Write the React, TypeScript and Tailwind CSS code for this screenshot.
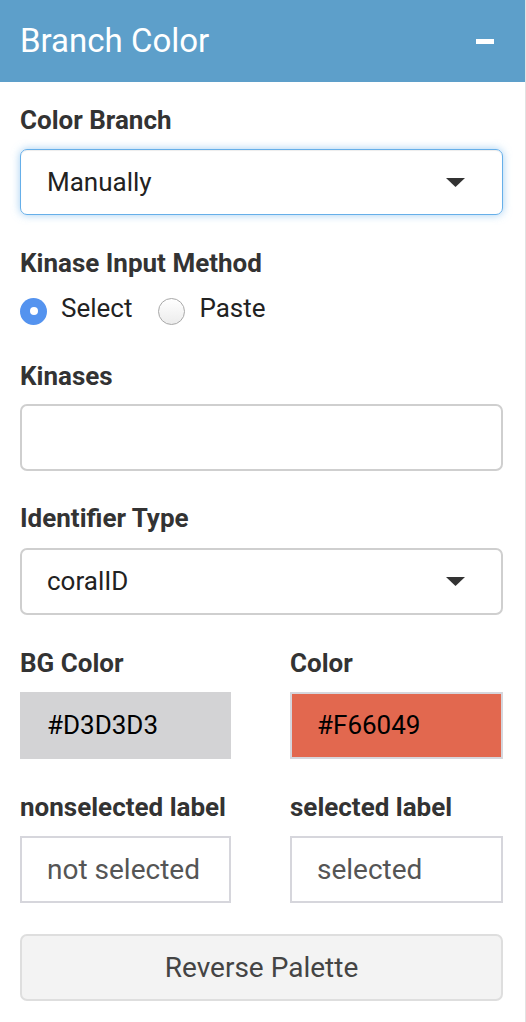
import { useState } from "react";

function Caret() {
  return (
    <svg width="19" height="9" viewBox="0 0 19 9" className="shrink-0">
      <path d="M0 0 L19 0 L9.5 9 Z" fill="#333" />
    </svg>
  );
}

function FieldLabel({ children }: { children: React.ReactNode }) {
  return <div className="h-[30px] text-[26px] leading-[30px] font-bold text-[#333] whitespace-nowrap">{children}</div>;
}

export default function App() {
  const [method, setMethod] = useState<"select" | "paste">("select");

  return (
    <div className="w-[526px] h-[1022px] bg-white font-['Roboto','Liberation_Sans',sans-serif] overflow-hidden">
      <div className="w-full h-full border-r border-[#e2e2e2] flex flex-col">
        {/* Header */}
        <div className="h-[82px] bg-[#5d9fca] flex items-center justify-between pl-[20px] pr-[31px] shrink-0">
          <h3 className="text-[33px] leading-[38px] text-white font-normal">Branch Color</h3>
          <div className="w-[18px] h-[5px] bg-white" />
        </div>

        <div className="px-[20px] pt-[23px] w-[523px]">
          {/* Color Branch */}
          <FieldLabel>Color Branch</FieldLabel>
          <div className="mt-[14px] h-[66px] rounded-[7px] border border-[#66afe9] shadow-[0_0_8px_rgba(102,175,233,0.6),inset_0_1px_1px_rgba(0,0,0,0.075)] flex items-center justify-between pl-[26px] pr-[37px]">
            <span className="text-[26px] text-[#222]">Manually</span>
            <Caret />
          </div>

          {/* Kinase Input Method */}
          <div className="mt-[33px]">
            <FieldLabel>Kinase Input Method</FieldLabel>
          </div>
          <div className="mt-[15px] h-[30px] flex items-center">
            <button onClick={() => setMethod("select")} className="flex items-center">
              <span
                className={`mt-[6px] w-[27px] h-[27px] rounded-full flex items-center justify-center ${
                  method === "select" ? "bg-[#5493ef]" : "border border-[#a8a8a8] bg-gradient-to-b from-white to-[#ececec]"
                }`}
              >
                {method === "select" && <span className="w-[8px] h-[8px] rounded-full bg-white" />}
              </span>
              <span className="ml-[14px] text-[26px] leading-[30px] text-[#222]">Select</span>
            </button>
            <button onClick={() => setMethod("paste")} className="flex items-center ml-[26px]">
              <span
                className={`mt-[6px] w-[27px] h-[27px] rounded-full flex items-center justify-center ${
                  method === "paste" ? "bg-[#5493ef]" : "border border-[#a8a8a8] bg-gradient-to-b from-white to-[#ececec]"
                }`}
              >
                {method === "paste" && <span className="w-[8px] h-[8px] rounded-full bg-white" />}
              </span>
              <span className="ml-[14px] text-[26px] leading-[30px] text-[#222]">Paste</span>
            </button>
          </div>

          {/* Kinases */}
          <div className="mt-[38px]">
            <FieldLabel>Kinases</FieldLabel>
          </div>
          <div className="mt-[13px] h-[67px] rounded-[7px] border-2 border-[#cfcfcf]" />

          {/* Identifier Type */}
          <div className="mt-[32px]">
            <FieldLabel>Identifier Type</FieldLabel>
          </div>
          <div className="mt-[15px] h-[67px] rounded-[7px] border-2 border-[#cfcfcf] flex items-center justify-between pl-[25px] pr-[36px]">
            <span className="text-[26px] text-[#222]">coralID</span>
            <Caret />
          </div>

          {/* Colors */}
          <div className="mt-[33px] grid grid-cols-[211px_213px] gap-x-[59px]">
            <FieldLabel>BG Color</FieldLabel>
            <FieldLabel>Color</FieldLabel>
            <div className="mt-[14px] h-[67px] bg-[#d3d3d5] flex items-center pl-[27px] text-[26px] text-black">#D3D3D3</div>
            <div className="mt-[14px] h-[67px] bg-[#e2684f] border-2 border-[#d6d6dc] flex items-center pl-[25px] text-[26px] text-black">#F66049</div>
          </div>

          {/* Labels */}
          <div className="mt-[33px] grid grid-cols-[211px_213px] gap-x-[59px]">
            <FieldLabel>nonselected label</FieldLabel>
            <FieldLabel>selected label</FieldLabel>
            <div className="mt-[14px] h-[67px] border-2 border-[#d6d6dc] flex items-center pl-[25px] text-[28px] text-[#555]">not selected</div>
            <div className="mt-[14px] h-[67px] border-2 border-[#d6d6dc] flex items-center pl-[25px] text-[28px] text-[#555]">selected</div>
          </div>

          {/* Reverse */}
          <button className="mt-[31px] w-full h-[67px] rounded-[7px] bg-[#f3f3f3] border-2 border-[#dedede] text-[28px] text-[#444]">
            Reverse Palette
          </button>
        </div>
      </div>
    </div>
  );
}
